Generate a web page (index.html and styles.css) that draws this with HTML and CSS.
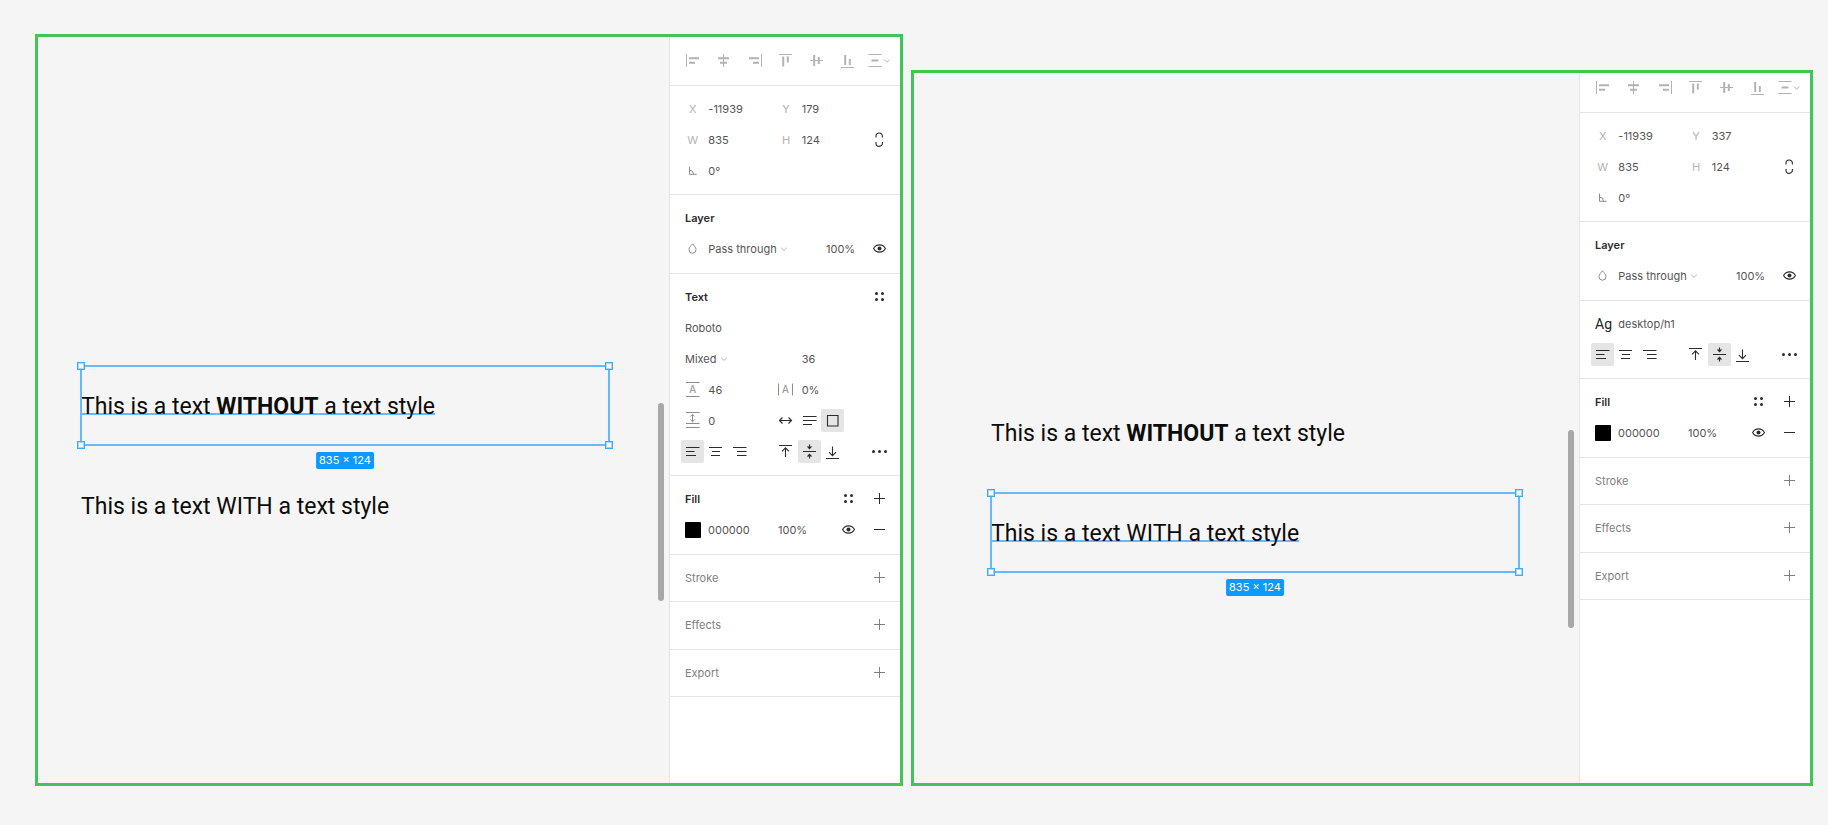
FILE: index.html
```html
<!DOCTYPE html>
<html lang="en">
<head>
<meta charset="utf-8">
<title>Text style comparison</title>
<link rel="stylesheet" href="styles.css">
</head>
<body>
<svg class="sprite" aria-hidden="true">
  <symbol id="al-left" viewBox="0 0 23 23"><path d="M5.5 5v13"/><path class="thick" d="M8 9.2h10M8 13.8h6"/></symbol>
  <symbol id="al-hcenter" viewBox="0 0 23 23"><path d="M11.5 5v13"/><path class="thick" d="M6 9.2h11M8 13.8h7"/></symbol>
  <symbol id="al-right" viewBox="0 0 23 23"><path d="M18.5 5v13"/><path class="thick" d="M6 9.2h10M10 13.8h6"/></symbol>
  <symbol id="al-top" viewBox="0 0 23 23"><path d="M5 5.5h13"/><path class="thick" d="M9.2 7.5v10M13.8 7.5v6"/></symbol>
  <symbol id="al-vcenter" viewBox="0 0 23 23"><path d="M5 11.5h13"/><path class="thick" d="M9.2 6v11M13.8 8v7"/></symbol>
  <symbol id="al-bottom" viewBox="0 0 23 23"><path d="M5 18.5h13"/><path class="thick" d="M9.2 6v10M13.8 10v6"/></symbol>
  <symbol id="distribute" viewBox="0 0 23 23"><path d="M1.5 5.5h13M1.5 17.5h13"/><path class="thick" d="M4.5 11.5h7"/><path d="M17 10.5l2.7 2.7 2.7-2.7"/></symbol>
  <symbol id="chevron" viewBox="0 0 8 8"><path d="M1.2 2.7L4 5.4l2.8-2.7"/></symbol>
  <symbol id="link" viewBox="0 0 23 23"><path class="mid" d="M8 9.5V8.200a3.200 3.200 0 0 1 6.400 0v1.300M8 13.900v1.300a3.200 3.200 0 0 0 6.400 0v-1.300"/></symbol>
  <symbol id="angle" viewBox="0 0 23 23"><path d="M8.500 7.500v7.800h7.200M8.500 11.200a4 4 0 0 1 4 4"/></symbol>
  <symbol id="drop" viewBox="0 0 23 23"><path d="M11.500 6.800C9.800 8.800 8 10.600 8 12.700a3.500 3.500 0 0 0 7 0C15 10.600 13.200 8.800 11.500 6.800z"/></symbol>
  <symbol id="eye" viewBox="0 0 23 23"><path class="mid" d="M5.600 11.500C8.200 6.700 14.800 6.700 17.400 11.500C14.800 16.300 8.200 16.300 5.600 11.500z"/><circle class="solid" cx="11.500" cy="11.500" r="2"/></symbol>
  <symbol id="dots" viewBox="0 0 23 23"><g class="solid"><circle cx="8.500" cy="8.500" r="1.500"/><circle cx="14.500" cy="8.500" r="1.500"/><circle cx="8.500" cy="14.500" r="1.500"/><circle cx="14.500" cy="14.500" r="1.500"/></g></symbol>
  <symbol id="more" viewBox="0 0 23 23"><g class="solid"><circle cx="5.500" cy="11.500" r="1.500"/><circle cx="11.500" cy="11.500" r="1.500"/><circle cx="17.500" cy="11.500" r="1.500"/></g></symbol>
  <symbol id="plus" viewBox="0 0 23 23"><path d="M11.500 6v11M6 11.500h11"/></symbol>
  <symbol id="minus" viewBox="0 0 23 23"><path d="M6 11.500h11"/></symbol>
  <symbol id="line-height" viewBox="0 0 23 23"><path d="M5 4.500h13.500M5 18.500h13.500"/><text x="11.700" y="15" text-anchor="middle">A</text></symbol>
  <symbol id="letter-spacing" viewBox="0 0 23 23"><path d="M4.500 5.500v12M18.500 5.500v12"/><text x="11.500" y="15" text-anchor="middle">A</text></symbol>
  <symbol id="para-spacing" viewBox="0 0 23 23"><path d="M5 3.500h13.500M5 14.500h13.500M5 18.500h13.500M11.500 5.500v7M9.300 7.500l2.200-2.200 2.200 2.200M9.300 10.500l2.200 2.200 2.200-2.200"/></symbol>
  <symbol id="auto-width" viewBox="0 0 23 23"><path class="mid" d="M5.500 11.500h12M8.500 8.500l-3 3 3 3M14.500 8.500l3 3-3 3"/></symbol>
  <symbol id="auto-height" viewBox="0 0 23 23"><path class="mid" d="M5 7.500h13.500M5 11.500h13.500M5 15.500h9"/></symbol>
  <symbol id="fixed-size" viewBox="0 0 23 23"><path class="mid" d="M6.500 6.500h10.500v10.500H6.500z"/></symbol>
  <symbol id="tx-left" viewBox="0 0 23 23"><path class="mid" d="M5 7.500h13.500M5 11.500h8.500M5 15.500h10"/></symbol>
  <symbol id="tx-center" viewBox="0 0 23 23"><path class="mid" d="M5 7.500h13M8 11.500h8M7 15.500h9"/></symbol>
  <symbol id="tx-right" viewBox="0 0 23 23"><path class="mid" d="M5 7.500h13.500M9 11.500h9.500M9 15.500h9.500"/></symbol>
  <symbol id="v-top" viewBox="0 0 23 23"><path class="mid" d="M5 5.500h13M11.500 17V7.800M8 11.300l3.500-3.500 3.500 3.500"/></symbol>
  <symbol id="v-middle" viewBox="0 0 23 23"><path class="mid" d="M5 11.500h13M11.500 4.500v4M11.500 14.500v4"/><path class="solid" d="M8.700 6.500h5.600L11.500 9.500zM8.700 16.500h5.600L11.500 13.500z"/></symbol>
  <symbol id="v-bottom" viewBox="0 0 23 23"><path class="mid" d="M5 18.500h13M11.500 6.500v9.200M8 12.200l3.500 3.500 3.500-3.500"/></symbol>
</svg>

<main class="board">
  <section class="frame" aria-label="Layer without a text style">
    <div class="canvas">
      <div class="layer selected">
        <p class="copy">This is a text <b>WITHOUT</b> a text style</p>
        <i class="handle tl"></i><i class="handle tr"></i><i class="handle bl"></i><i class="handle br"></i>
        <span class="size">835 × 124</span>
      </div>
      <div class="layer"><p class="copy">This is a text WITH a text style</p></div>
      <div class="scrollbar"></div>
    </div>
    <aside class="panel">
      <div class="align-bar">
        <button class="icon" aria-label="Align left"><svg><use href="#al-left"/></svg></button>
        <button class="icon" aria-label="Align horizontal centers"><svg><use href="#al-hcenter"/></svg></button>
        <button class="icon" aria-label="Align right"><svg><use href="#al-right"/></svg></button>
        <button class="icon" aria-label="Align top"><svg><use href="#al-top"/></svg></button>
        <button class="icon" aria-label="Align vertical centers"><svg><use href="#al-vcenter"/></svg></button>
        <button class="icon" aria-label="Align bottom"><svg><use href="#al-bottom"/></svg></button>
        <button class="icon" aria-label="Distribute"><svg><use href="#distribute"/></svg></button>
      </div>
      <div class="group">
        <div class="row">
          <label class="tag" for="a-x">X</label><input class="value w3" id="a-x" value="-11939">
          <label class="tag" for="a-y">Y</label><input class="value w3" id="a-y" value="179">
        </div>
        <div class="row">
          <label class="tag" for="a-w">W</label><input class="value w3" id="a-w" value="835">
          <label class="tag" for="a-h">H</label><input class="value w3" id="a-h" value="124">
          <button class="icon dark" aria-label="Constrain proportions"><svg><use href="#link"/></svg></button>
        </div>
        <div class="row">
          <label class="icon gray" for="a-r" aria-label="Rotation"><svg><use href="#angle"/></svg></label><input class="value w3" id="a-r" value="0°">
        </div>
      </div>
      <div class="group roomy">
        <div class="title"><h2>Layer</h2></div>
        <div class="row">
          <label class="icon gray" for="a-blend" aria-label="Blend mode"><svg><use href="#drop"/></svg></label>
          <div class="pick w5"><select id="a-blend"><option>Pass through</option></select><svg class="chev"><use href="#chevron"/></svg></div>
          <input class="value w2" aria-label="Layer opacity" value="100%">
          <button class="icon dark" aria-label="Toggle visibility"><svg><use href="#eye"/></svg></button>
        </div>
      </div>
      <div class="group">
        <div class="title"><h2>Text</h2><button class="icon dark" aria-label="Text styles"><svg><use href="#dots"/></svg></button></div>
        <div class="row"><input class="value w9" aria-label="Font family" value="Roboto"></div>
        <div class="row">
          <div class="pick w5"><select aria-label="Font weight"><option>Mixed</option></select><svg class="chev"><use href="#chevron"/></svg></div>
          <input class="value w3" aria-label="Font size" value="36">
        </div>
        <div class="row">
          <label class="icon gray" for="a-lh" aria-label="Line height"><svg><use href="#line-height"/></svg></label><input class="value w3" id="a-lh" value="46">
          <label class="icon gray" for="a-ls" aria-label="Letter spacing"><svg><use href="#letter-spacing"/></svg></label><input class="value w3" id="a-ls" value="0%">
        </div>
        <div class="row">
          <label class="icon gray" for="a-ps" aria-label="Paragraph spacing"><svg><use href="#para-spacing"/></svg></label><input class="value w3" id="a-ps" value="0">
          <button class="icon dark" aria-label="Auto width"><svg><use href="#auto-width"/></svg></button>
          <button class="icon dark" aria-label="Auto height"><svg><use href="#auto-height"/></svg></button>
          <button class="icon dark on" aria-label="Fixed size"><svg><use href="#fixed-size"/></svg></button>
        </div>
        <div class="row">
          <button class="icon dark on" aria-label="Text align left"><svg><use href="#tx-left"/></svg></button>
          <button class="icon dark" aria-label="Text align center"><svg><use href="#tx-center"/></svg></button>
          <button class="icon dark" aria-label="Text align right"><svg><use href="#tx-right"/></svg></button>
          <button class="icon dark from5" aria-label="Text align top"><svg><use href="#v-top"/></svg></button>
          <button class="icon dark on" aria-label="Text align middle"><svg><use href="#v-middle"/></svg></button>
          <button class="icon dark" aria-label="Text align bottom"><svg><use href="#v-bottom"/></svg></button>
          <button class="icon dark from9" aria-label="Type settings"><svg><use href="#more"/></svg></button>
        </div>
      </div>
      <div class="group roomy">
        <div class="title"><h2>Fill</h2><button class="icon dark" aria-label="Color styles"><svg><use href="#dots"/></svg></button><button class="icon dark" aria-label="Add fill"><svg><use href="#plus"/></svg></button></div>
        <div class="fill-row">
          <div class="row paint"><button class="swatch" aria-label="Fill color"></button><input class="value w3" aria-label="Fill hex" value="000000"><input class="value w2" aria-label="Fill opacity" value="100%"></div>
          <button class="icon dark" aria-label="Toggle fill"><svg><use href="#eye"/></svg></button>
          <button class="icon dark" aria-label="Remove fill"><svg><use href="#minus"/></svg></button>
        </div>
      </div>
      <div class="group"><div class="title muted"><h2>Stroke</h2><button class="icon" aria-label="Add stroke"><svg><use href="#plus"/></svg></button></div></div>
      <div class="group roomy"><div class="title muted"><h2>Effects</h2><button class="icon" aria-label="Add effect"><svg><use href="#plus"/></svg></button></div></div>
      <div class="group"><div class="title muted"><h2>Export</h2><button class="icon" aria-label="Add export"><svg><use href="#plus"/></svg></button></div></div>
    </aside>
  </section>

  <section class="frame scrolled" aria-label="Layer with a text style">
    <div class="canvas">
      <div class="layer"><p class="copy">This is a text <b>WITHOUT</b> a text style</p></div>
      <div class="layer selected">
        <p class="copy">This is a text WITH a text style</p>
        <i class="handle tl"></i><i class="handle tr"></i><i class="handle bl"></i><i class="handle br"></i>
        <span class="size">835 × 124</span>
      </div>
      <div class="scrollbar"></div>
    </div>
    <aside class="panel">
      <div class="align-bar">
        <button class="icon" aria-label="Align left"><svg><use href="#al-left"/></svg></button>
        <button class="icon" aria-label="Align horizontal centers"><svg><use href="#al-hcenter"/></svg></button>
        <button class="icon" aria-label="Align right"><svg><use href="#al-right"/></svg></button>
        <button class="icon" aria-label="Align top"><svg><use href="#al-top"/></svg></button>
        <button class="icon" aria-label="Align vertical centers"><svg><use href="#al-vcenter"/></svg></button>
        <button class="icon" aria-label="Align bottom"><svg><use href="#al-bottom"/></svg></button>
        <button class="icon" aria-label="Distribute"><svg><use href="#distribute"/></svg></button>
      </div>
      <div class="group">
        <div class="row">
          <label class="tag" for="b-x">X</label><input class="value w3" id="b-x" value="-11939">
          <label class="tag" for="b-y">Y</label><input class="value w3" id="b-y" value="337">
        </div>
        <div class="row">
          <label class="tag" for="b-w">W</label><input class="value w3" id="b-w" value="835">
          <label class="tag" for="b-h">H</label><input class="value w3" id="b-h" value="124">
          <button class="icon dark" aria-label="Constrain proportions"><svg><use href="#link"/></svg></button>
        </div>
        <div class="row">
          <label class="icon gray" for="b-r" aria-label="Rotation"><svg><use href="#angle"/></svg></label><input class="value w3" id="b-r" value="0°">
        </div>
      </div>
      <div class="group roomy">
        <div class="title"><h2>Layer</h2></div>
        <div class="row">
          <label class="icon gray" for="b-blend" aria-label="Blend mode"><svg><use href="#drop"/></svg></label>
          <div class="pick w5"><select id="b-blend"><option>Pass through</option></select><svg class="chev"><use href="#chevron"/></svg></div>
          <input class="value w2" aria-label="Layer opacity" value="100%">
          <button class="icon dark" aria-label="Toggle visibility"><svg><use href="#eye"/></svg></button>
        </div>
      </div>
      <div class="group">
        <div class="row"><span class="sample">Ag</span><button class="style-name">desktop/h1</button></div>
        <div class="row">
          <button class="icon dark on" aria-label="Text align left"><svg><use href="#tx-left"/></svg></button>
          <button class="icon dark" aria-label="Text align center"><svg><use href="#tx-center"/></svg></button>
          <button class="icon dark" aria-label="Text align right"><svg><use href="#tx-right"/></svg></button>
          <button class="icon dark from5" aria-label="Text align top"><svg><use href="#v-top"/></svg></button>
          <button class="icon dark on" aria-label="Text align middle"><svg><use href="#v-middle"/></svg></button>
          <button class="icon dark" aria-label="Text align bottom"><svg><use href="#v-bottom"/></svg></button>
          <button class="icon dark from9" aria-label="Type settings"><svg><use href="#more"/></svg></button>
        </div>
      </div>
      <div class="group roomy">
        <div class="title"><h2>Fill</h2><button class="icon dark" aria-label="Color styles"><svg><use href="#dots"/></svg></button><button class="icon dark" aria-label="Add fill"><svg><use href="#plus"/></svg></button></div>
        <div class="fill-row">
          <div class="row paint"><button class="swatch" aria-label="Fill color"></button><input class="value w3" aria-label="Fill hex" value="000000"><input class="value w2" aria-label="Fill opacity" value="100%"></div>
          <button class="icon dark" aria-label="Toggle fill"><svg><use href="#eye"/></svg></button>
          <button class="icon dark" aria-label="Remove fill"><svg><use href="#minus"/></svg></button>
        </div>
      </div>
      <div class="group"><div class="title muted"><h2>Stroke</h2><button class="icon" aria-label="Add stroke"><svg><use href="#plus"/></svg></button></div></div>
      <div class="group roomy"><div class="title muted"><h2>Effects</h2><button class="icon" aria-label="Add effect"><svg><use href="#plus"/></svg></button></div></div>
      <div class="group"><div class="title muted"><h2>Export</h2><button class="icon" aria-label="Add export"><svg><use href="#plus"/></svg></button></div></div>
    </aside>
  </section>
</main>
</body>
</html>
```

FILE: styles.css
```css
* { box-sizing: border-box; }

body {
  margin: 0;
  background: #f5f5f5;
  color: #555;
  font: 11px/16px Inter, "Liberation Sans", sans-serif;
}

button, input, select {
  margin: 0;
  padding: 0;
  border: 0;
  border-radius: 0;
  background: none;
  color: inherit;
  font: inherit;
  appearance: none;
}

.sprite { display: none; }

.board {
  display: grid;
  grid-template-columns: 868fr 902fr;
  gap: 8px;
  min-height: 100vh;
  padding: 34px 15px 39px 35px;
}

.frame {
  display: grid;
  grid-template-columns: 1fr 231px;
  overflow: hidden;
  border: 3px solid #43c459;
}

.frame.scrolled { margin-top: 36px; }

/* Canvas */
.canvas {
  position: relative;
  display: flex;
  flex-direction: column;
  gap: 19px;
  padding: 328px 59px 0 42px;
}

.scrolled .canvas { padding: 319px 59px 0 76px; }

.layer {
  position: relative;
  display: flex;
  align-items: center;
  height: 81px;
  padding: 2px 0 0 1px;
}

.selected { outline: 2px solid #66b9fb; outline-offset: -2px; }

.copy {
  margin: 0;
  color: #0c0c0c;
  font: 23px/32px Roboto, sans-serif;
  white-space: nowrap;
}

.copy b { font-weight: 700; }

.selected .copy {
  text-decoration: underline 2px #66b9fb;
  text-decoration-skip-ink: none;
  text-underline-offset: -1px;
}

.handle {
  position: absolute;
  width: 8px;
  height: 8px;
  border: 1px solid #3facfa;
  outline: 1px solid #a5d5fa;
  outline-offset: -2px;
  background: #fff;
}

.tl, .tr { top: -3px; }
.bl, .br { bottom: -3px; }
.tl, .bl { left: -3px; }
.tr, .br { right: -3px; }

.size {
  position: absolute;
  top: 100%;
  left: 50%;
  margin-top: 6px;
  padding: 0 3px;
  border-radius: 2px;
  background: #0d99ff;
  color: #fff;
  line-height: 17px;
  white-space: nowrap;
  transform: translateX(-50%);
}

.scrollbar {
  position: absolute;
  top: 366px;
  right: 5px;
  width: 6px;
  height: 198px;
  border-radius: 3px;
  background: #a8a8a8;
}

.scrolled .scrollbar { top: 357px; }

/* Properties panel */
.panel {
  border-left: 1px solid #e5e5e5;
  background: #fff;
}

.align-bar {
  display: flex;
  gap: 8px;
  padding: 12px 9px 13px 11px;
  border-bottom: 1px solid #e5e5e5;
}

.scrolled .align-bar { padding-top: 3px; }

.group {
  padding: 7px 9px 8px 11px;
  border-bottom: 1px solid #e5e5e5;
}

.group.roomy { padding-bottom: 9px; }

.row {
  display: grid;
  grid-template-columns: repeat(9, minmax(0, 1fr));
  align-items: center;
  height: 31px;
}

.title {
  display: flex;
  align-items: center;
  gap: 8px;
  height: 31px;
}

.title h2 {
  flex: 1;
  margin: 0;
  padding-left: 4px;
  color: #2c2c2c;
  font-size: 11px;
  font-weight: 600;
}

.title.muted h2 { color: #808080; font-weight: 400; }

.icon {
  display: block;
  width: 23px;
  height: 23px;
  border-radius: 2px;
  color: #b3b3b3;
}

.icon svg {
  display: block;
  width: 23px;
  height: 23px;
  overflow: visible;
}

.icon.gray { color: #8c8c8c; }
.icon.dark { color: #2b2b2b; }
.muted .icon { color: #808080; }
.icon.on { background: #e5e5e5; }

symbol { fill: none; stroke: currentColor; stroke-width: 1px; overflow: visible; }
symbol .mid { stroke-width: 1.1px; }
symbol .thick { stroke-width: 2px; }
symbol .solid { fill: currentColor; stroke: none; }
symbol text { fill: currentColor; stroke: none; font: 10px Inter, sans-serif; }

.tag { color: #b3b3b3; text-align: center; }

.value { width: 100%; padding-left: 4px; }

.w2 { grid-column: span 2; padding-left: 5px; }
.w3 { grid-column: span 3; }
.w5 { grid-column: span 5; }
.w9 { grid-column: span 9; }
.from5 { grid-column-start: 5; }
.from9 { grid-column-start: 9; }

.pick {
  display: flex;
  align-items: center;
  gap: 3px;
  padding-left: 4px;
}

.chev { width: 8px; height: 8px; color: #b3b3b3; }

.fill-row {
  display: grid;
  grid-template-columns: 1fr 23px 23px;
  column-gap: 8px;
  align-items: center;
}

.row.paint { grid-template-columns: repeat(6, 23px); }

.swatch {
  width: 16px;
  height: 16px;
  margin-left: 4px;
  border-radius: 1px;
  background: #000;
}

.sample {
  padding-left: 4px;
  color: #222;
  font: 14px/16px Roboto, sans-serif;
}

.style-name {
  grid-column: span 8;
  padding-left: 4px;
  text-align: left;
}
```
